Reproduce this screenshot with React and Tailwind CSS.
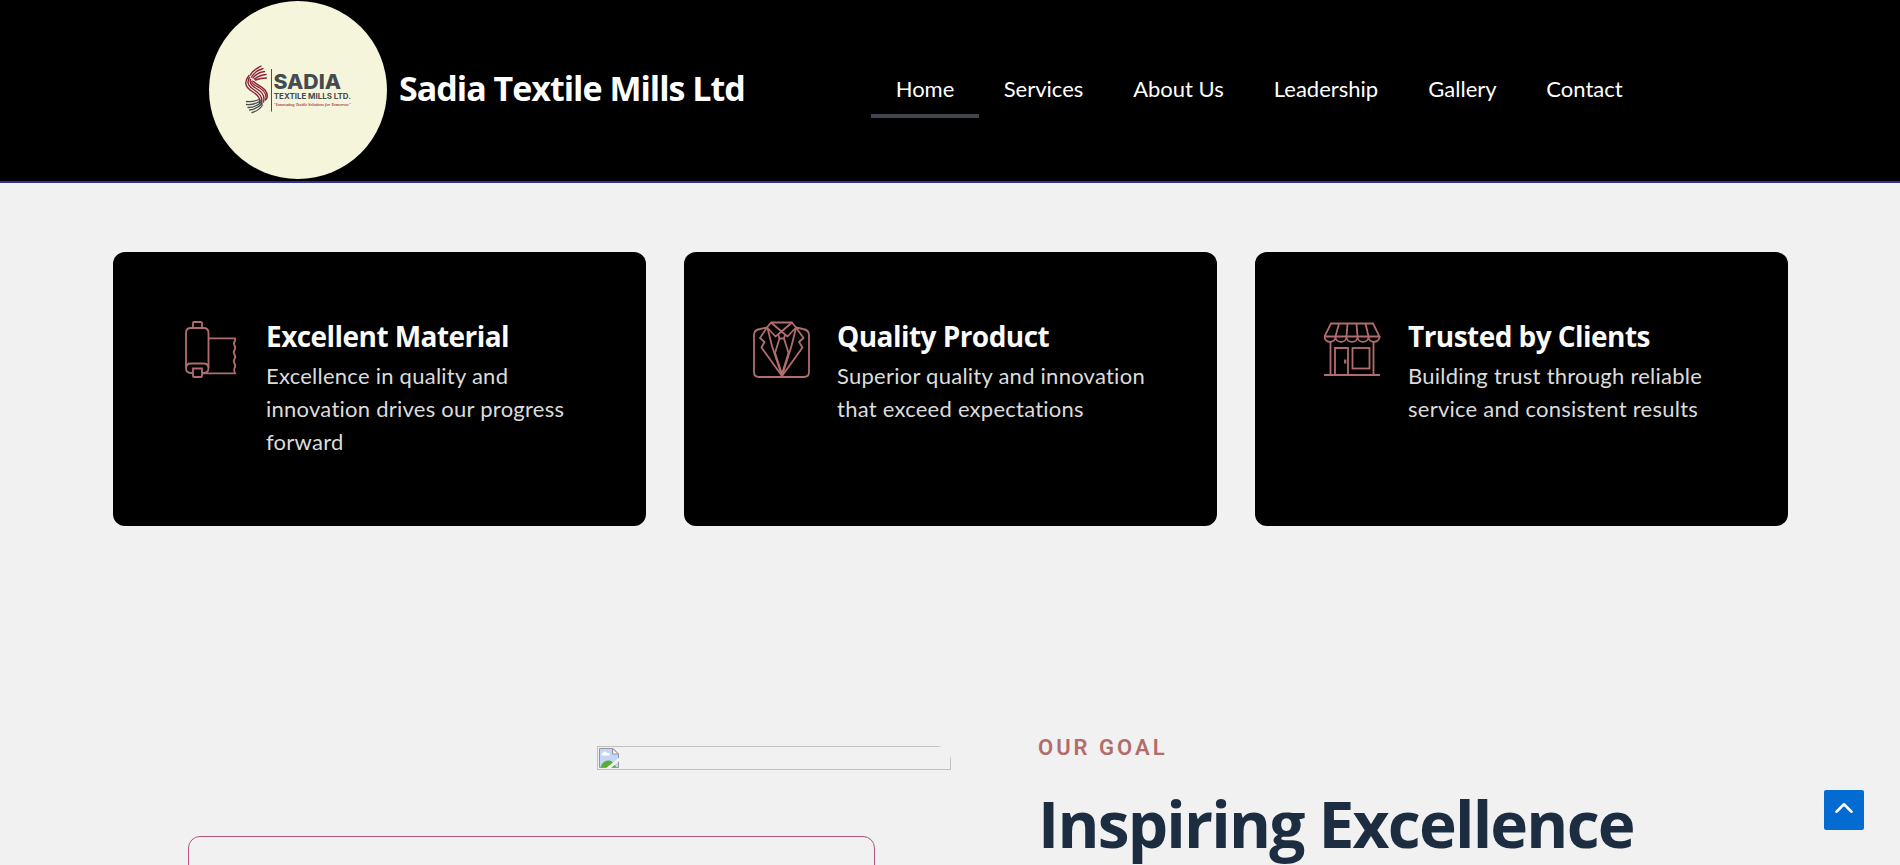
import { ChevronUp } from 'lucide-react';

const NAV_ITEMS = [
  { label: 'Home', width: 'w-[108px]', active: true },
  { label: 'Services', width: 'w-[129px]' },
  { label: 'About Us', width: 'w-[141px]' },
  { label: 'Leadership', width: 'w-[154px]' },
  { label: 'Gallery', width: 'w-[119px]' },
  { label: 'Contact', width: 'w-[125px]' },
];

const FEATURES = [
  {
    title: 'Excellent Material',
    text: 'Excellence in quality and innovation drives our progress forward',
    Icon: FabricIcon,
  },
  {
    title: 'Quality Product',
    text: 'Superior quality and innovation that exceed expectations',
    Icon: SuitIcon,
  },
  {
    title: 'Trusted by Clients',
    text: 'Building trust through reliable service and consistent results',
    Icon: StoreIcon,
  },
];

function Logo() {
  return (
    <svg viewBox="209 1 178 178" className="w-[178px] h-[178px] flex-shrink-0 rounded-full bg-[#f5f5dc]">
      {/* Thread mark */}
      <g fill="none" stroke="#8f2136" strokeWidth="1.4" strokeLinecap="round">
        <path d="M261 66 C256 69 252 71 250.500 75" />
        <path d="M263 68.500 C258 70 254 73 251.500 77" />
        <path d="M264.500 71.500 C259 72.500 255 75 253 78" />
        <path d="M266 74.500 C261 75 257 77 254.500 79" />
        <path d="M266.500 78 C262 78 258 79 255.500 80" />
        <path d="M249 75.500 C243 83 246 88 253 92 C259 96 261 99 259.500 103" />
        <path d="M249.500 77.500 C246 83 249 87 255 90.500 C261 94.500 263 98 261.500 103" />
        <path d="M250.500 79.500 C249 83 252 86 257 89 C263 92.500 265 97 263.500 102" />
        <path d="M252 81 C251 83 254 85 259 87.500 C265 91 267 96 265.500 100" />
        <path d="M253.500 81.500 C256 84.500 262 86 265 90 C268 94 267.500 97 266.500 99" />
      </g>
      <g fill="none" stroke="#454b50" strokeWidth="1.3" strokeLinecap="round">
        <path d="M246.500 101.500 C252 102 255 101.500 259 99.500" />
        <path d="M246.500 104.500 C252 105 257 103.500 261 100.500" />
        <path d="M248 107.500 C253 107.500 258 105.500 261.500 102" />
        <path d="M249.500 110 C254 109.500 259 107 262 103.500" />
        <path d="M252 112.500 C256 111.500 260 109 262.500 105" />
      </g>
      <path d="M271.500 69 V111.500" stroke="#8f3040" strokeWidth="1" />
      <text x="273.500" y="89.200" textLength="67.500" lengthAdjust="spacingAndGlyphs" fill="#454b50" fontFamily="Inter, sans-serif" fontSize="20" fontWeight="800">SADIA</text>
      <text x="273.800" y="99" textLength="77" lengthAdjust="spacingAndGlyphs" fill="#454b50" fontFamily="Inter, sans-serif" fontSize="8" fontWeight="700">TEXTILE MILLS LTD.</text>
      <text x="273.500" y="105.800" textLength="77.500" lengthAdjust="spacingAndGlyphs" fill="#a8434c" fontFamily="Liberation Serif, serif" fontSize="5" fontStyle="italic" fontWeight="700">"Innovating Textile Solutions for Tomorrow"</text>
    </svg>
  );
}

function FabricIcon() {
  return (
    <svg viewBox="12 11 57 57" className="w-[57px] h-[57px] flex-shrink-0" fill="none" stroke="#b16d6d" strokeWidth="1.800">
      <path d="M23 18 V13 Q23 12 24 12 H31 Q32 12 32 13 V18" />
      <path d="M23 63 H21 Q16 63 16 58 V23 Q16 18 21 18 H33.500 Q38.500 18 38.500 23 V58 Q38.500 63 33.500 63 H32" />
      <path d="M16 58 Q16 53.500 21 53.500 H33.500 Q38.500 53.500 38.500 58" />
      <path d="M23 58.500 H32 V66 Q32 67 31 67 H24 Q23 67 23 66 Z" />
      <path d="M38.500 28.300 H65 V31 Q63 33 64.500 35.500 Q66 38 64.500 40 Q63 42 64.500 44.500 Q66 47 64.500 49 Q63 51 64.500 53.500 Q66 56 64.500 58 Q63.500 60 65 63.300 H33" />
    </svg>
  );
}

function SuitIcon() {
  return (
    <svg viewBox="13 11 57 57" className="w-[57px] h-[57px] flex-shrink-0" fill="none" stroke="#b16d6d" strokeWidth="1.800" strokeLinejoin="round">
      <path d="M27 17.500 L20 19 Q14 20 14 25 V62 Q14 67 19 67 H64 Q69 67 69 62 V25 Q69 20 63 19 L56 17.500" />
      <path d="M31 12.500 H52 L56 17.500 L47.500 26.500 L41.500 21.500 L35.500 26.500 L27 17.500 Z" />
      <path d="M31 12.500 L41.500 21.500 L52 12.500" />
      <path d="M27 17.500 L20 28 L24.500 32 L21.500 37.500 L42 66 L62.500 37.500 L59 32 L63.500 28 L56 17.500" />
      <path d="M27.500 18 L32 36 L42 66 L51.500 36 L56 18" />
      <path d="M38.500 25 L39.500 28.500 H44 L45 25" />
      <path d="M39.500 28.500 L35 43 L42 64 L48.500 43 L44 28.500" />
    </svg>
  );
}

function StoreIcon() {
  return (
    <svg viewBox="14 11 57 57" className="w-[57px] h-[57px] flex-shrink-0" fill="none" stroke="#b16d6d" strokeWidth="1.800">
      <path d="M21 13.500 H63 L69.500 26.500 H14.500 Z" />
      <path d="M29 13.500 L25.500 26.500 M37.500 13.500 L36.500 26.500 M46.500 13.500 L47.500 26.500 M55.500 13.500 L58.500 26.500" />
      <path d="M14.500 26.500 C14.500 33.500 25.500 33.500 25.500 27 C25.500 33.500 36.500 33.500 36.500 27 C36.500 33.500 47.500 33.500 47.500 27 C47.500 33.500 58.500 33.500 58.500 27 C58.500 33.500 69.500 33.500 69.500 26.500" />
      <path d="M20.500 31 V65 M63.500 31 V65 M14 65 H70" />
      <path d="M25 65 V38 H38 V65" />
      <rect x="42.500" y="38" width="17" height="20.500" />
      <path d="M35.200 49.500 V53.500" strokeWidth="2.200" />
    </svg>
  );
}

function BrokenImage() {
  return (
    <div className="flex w-[354px] h-6 border border-[#c0c0c0] p-px">
      <svg viewBox="0 0 20 20" className="w-5 h-5">
        <path d="M0.500 0.500 H14 L19.500 6 V19.500 H0.500 Z" fill="#c5d5f5" stroke="#969696" />
        <circle cx="6" cy="5.500" r="2" fill="#fff" />
        <rect x="2.500" y="5" width="8" height="2.500" rx="1.200" fill="#fff" />
        <path d="M1.500 19 Q4 12.500 9.500 12.500 Q14 12.500 17 19 Z" fill="#57ad36" />
        <path d="M13.500 0.500 V6 H19.500 Z" fill="#f5f5f5" stroke="#969696" />
        <path d="M20.500 11 L8.500 21" stroke="#f1f1f1" strokeWidth="3" />
      </svg>
    </div>
  );
}

function Header() {
  return (
    <header className="flex h-[183px] bg-black border-b-2 border-[#30308f] pl-[209px] pb-px">
      <div className="flex items-center w-[662px]">
        <Logo />
        <span className="ml-[12px] -mt-[4px] whitespace-nowrap font-['Open_Sans',sans-serif] text-[34px] font-bold tracking-[-1px] text-white">
          Sadia Textile Mills Ltd
        </span>
      </div>
      <nav className="flex items-center font-['Lato',sans-serif] text-[22px] text-white">
        {NAV_ITEMS.map(({ label, width, active }) => (
          <a
            key={label}
            href="#"
            className={`${width} h-[56px] pb-[4px] flex items-center justify-center whitespace-nowrap border-y-4 border-t-transparent ${active ? 'border-b-[#40444f]' : 'border-b-transparent'}`}
          >
            {label}
          </a>
        ))}
      </nav>
    </header>
  );
}

export default function App() {
  return (
    <div className="w-full h-[865px] overflow-hidden bg-[#f1f1f1]">
      <Header />

      <section className="grid grid-cols-3 gap-[38px] pl-[113px] pr-[112px] mt-[69px]">
        {FEATURES.map(({ title, text, Icon }) => (
          <article key={title} className="flex gap-[27px] h-[274px] rounded-xl bg-black pl-[69px] pt-[69px]">
            <Icon />
            <div className="w-[318px] -mt-[4px]">
              <h3 className="font-['Open_Sans',sans-serif] text-[28px] leading-[38px] font-bold tracking-[-0.55px] text-[#fafafa] whitespace-nowrap">
                {title}
              </h3>
              <p className="mt-[4px] font-['Lato',sans-serif] text-[22px] leading-[33px] tracking-[0.25px] text-[#dcdcdc]">{text}</p>
            </div>
          </article>
        ))}
      </section>

      <section className="flex pl-[188px] pt-[202px]">
        <div className="w-[763px] pt-[18px]">
          <div className="ml-[409px] w-[354px] overflow-hidden rounded-tr-[15px]">
            <BrokenImage />
          </div>
          <div className="mt-[66px] w-[687px] h-[200px] rounded-[12px] border border-[#af5680]" />
        </div>
        <div className="ml-[87px] pt-[3px]">
          <p className="font-['Roboto',sans-serif] text-[22px] leading-[34px] font-semibold tracking-[3px] text-[#b06d6c]">OUR GOAL</p>
          <h2 className="mt-[26px] whitespace-nowrap font-['Open_Sans',sans-serif] text-[64px] leading-[66px] font-bold tracking-[-1.8px] text-[#1d2d41]">
            Inspiring Excellence
          </h2>
        </div>
      </section>

      {/* Back to top */}
      <button
        type="button"
        aria-label="Back to top"
        className="fixed right-9 bottom-[35px] w-10 h-10 flex items-center justify-center rounded-[2px] bg-[#046bd2] text-white"
      >
        <ChevronUp size={30} strokeWidth={2} className="-mt-1" />
      </button>
    </div>
  );
}
